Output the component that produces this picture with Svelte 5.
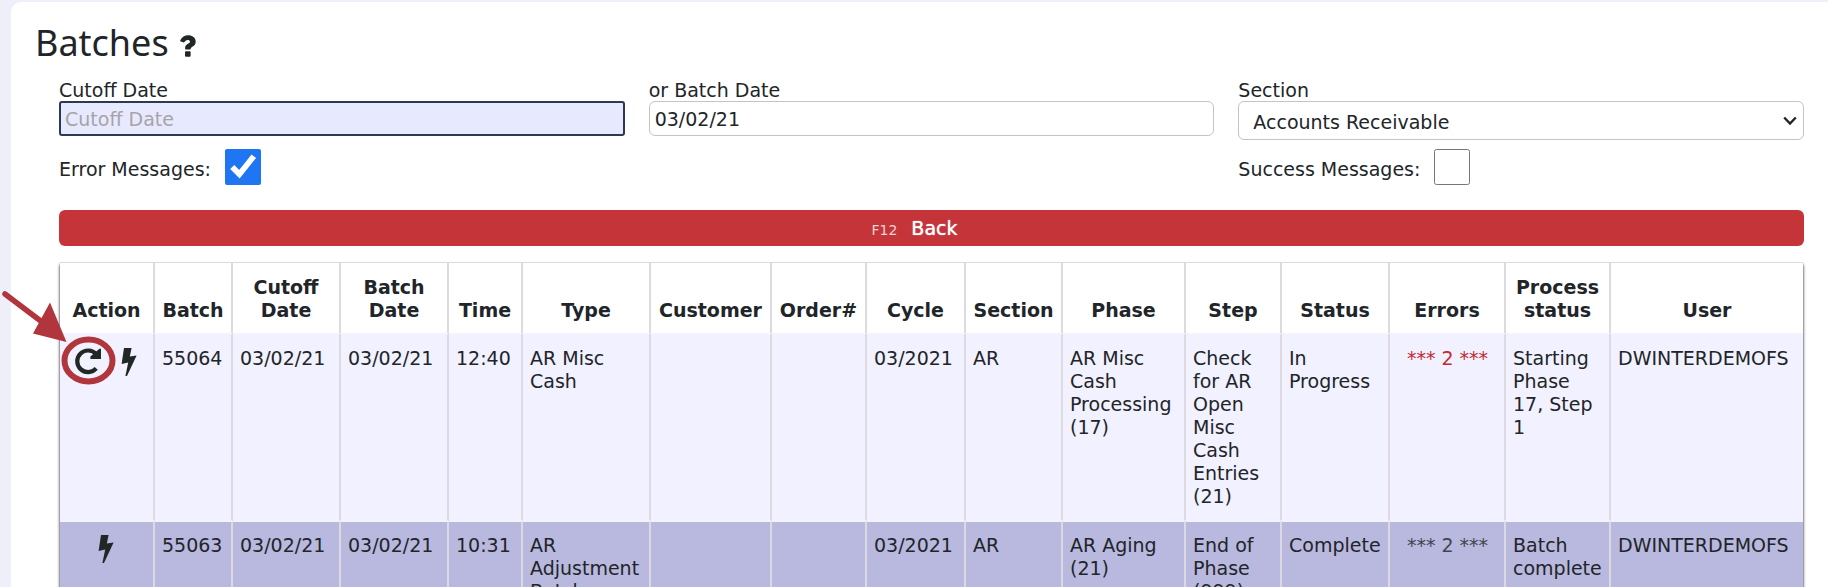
<script>
  const columns = [
    { label: 'Action', width: 95 },
    { label: 'Batch', width: 78 },
    { label: 'Cutoff Date', width: 108 },
    { label: 'Batch Date', width: 108 },
    { label: 'Time', width: 74 },
    { label: 'Type', width: 128 },
    { label: 'Customer', width: 121 },
    { label: 'Order#', width: 95 },
    { label: 'Cycle', width: 99 },
    { label: 'Section', width: 97 },
    { label: 'Phase', width: 123 },
    { label: 'Step', width: 96 },
    { label: 'Status', width: 108 },
    { label: 'Errors', width: 116 },
    { label: 'Process status', width: 105 },
    { label: 'User', width: 192 }
  ];

  const rows = [
    {
      retry: true,
      failed: true,
      before: ['55064', '03/02/21', '03/02/21', '12:40', 'AR Misc Cash', '', '', '03/2021', 'AR',
        'AR Misc Cash Processing (17)', 'Check for AR Open Misc Cash Entries (21)', 'In Progress'],
      errors: '*** 2 ***',
      after: ['Starting Phase 17, Step 1', 'DWINTERDEMOFS']
    },
    {
      retry: false,
      failed: false,
      before: ['55063', '03/02/21', '03/02/21', '10:31', 'AR Adjustment Batch', '', '', '03/2021', 'AR',
        'AR Aging (21)', 'End of Phase (999)', 'Complete'],
      errors: '*** 2 ***',
      after: ['Batch complete', 'DWINTERDEMOFS']
    }
  ];

  let cutoffDate = $state('');
  let batchDate = $state('03/02/21');
  let section = $state('Accounts Receivable');
  let showErrors = $state(true);
  let showSuccess = $state(false);
</script>

<main class="panel">
  <header class="title">
    <h1>Batches</h1>
    <button class="icon-button" aria-label="Help">
      <svg width="16" height="22" viewBox="0 0 16 22" aria-hidden="true">
        <path d="M0.3 5.2C2 1.8 4.6 0.2 8.2 0.2c4 0 7.5 2.4 7.5 6.2 0 5-5 5.2-5 7.2 0 .6-.4 1-1 1H6.1c-.6 0-1-.4-1-1v-.6c0-4 4.9-4.2 4.9-6.2 0-1.2-1-1.8-2.2-1.8-1.6 0-2.4.9-3.3 2.1-.3.4-.8.5-1.2.2L.6 6.5c-.4-.3-.5-.9-.3-1.3Z" fill="currentColor" />
        <rect x="5" y="16.2" width="5.6" height="5.6" rx="1" fill="currentColor" />
      </svg>
    </button>
  </header>

  <div class="body">
    <form class="filters" onsubmit={(e) => e.preventDefault()}>
      <div class="field">
        <label for="cutoff">Cutoff Date</label>
        <input id="cutoff" class="text active" type="text" placeholder="Cutoff Date" bind:value={cutoffDate} />
      </div>
      <div class="field">
        <label for="batch">or Batch Date</label>
        <input id="batch" class="text" type="text" bind:value={batchDate} />
      </div>
      <div class="field">
        <label for="section">Section</label>
        <div class="select">
          <select id="section" bind:value={section}>
            <option>Accounts Receivable</option>
          </select>
          <svg class="chevron" width="14" height="10" viewBox="0 0 14 10" aria-hidden="true">
            <path d="M1.2 1.5 7 7.5l5.8-6" fill="none" stroke="currentColor" stroke-width="2.4" />
          </svg>
        </div>
      </div>
      <div class="check">
        <label for="errors">Error Messages:</label>
        <input id="errors" type="checkbox" bind:checked={showErrors} />
      </div>
      <div class="check last">
        <label for="success">Success Messages:</label>
        <input id="success" type="checkbox" bind:checked={showSuccess} />
      </div>
    </form>

    <button class="back"><small>F12</small><span>Back</span></button>

    <div class="table-wrap">
      <table>
        <colgroup>
          {#each columns as column}
            <col style="width: {column.width}px" />
          {/each}
        </colgroup>
        <thead>
          <tr>
            {#each columns as column}
              <th scope="col">{column.label}</th>
            {/each}
          </tr>
        </thead>
        <tbody>
          {#each rows as row}
            <tr>
              <td>
                <div class="actions">
                  {#if row.retry}
                    <button class="icon-button" aria-label="Retry batch">
                      <svg width="26" height="28" viewBox="0 0 26 28" aria-hidden="true">
                        <path d="M21.2 6.2A10.8 10.8 0 1 0 21.2 20.4" fill="none" stroke="currentColor" stroke-width="4.2" />
                        <path d="M26 0.8V11H15.4V8.6L24.4 0.8Z" fill="currentColor" />
                      </svg>
                    </button>
                  {/if}
                  <button class="icon-button" aria-label="Process batch">
                    <svg width="16" height="28" viewBox="0 0 16 28" aria-hidden="true">
                      <path d="M3 0H10.6L8.8 8.6 15.6 7.4 6 28H4.4L7.2 14.6 0.6 16Z" fill="currentColor" />
                    </svg>
                  </button>
                </div>
              </td>
              {#each row.before as value}
                <td>{value}</td>
              {/each}
              <td class="errors" class:failed={row.failed}>{row.errors}</td>
              {#each row.after as value}
                <td>{value}</td>
              {/each}
            </tr>
          {/each}
        </tbody>
      </table>
      <svg class="callout" width="120" height="100" viewBox="0 0 120 100" aria-hidden="true">
        <path d="M5 4 46 35" stroke="#b0353c" stroke-width="5.5" stroke-linecap="round" />
        <path d="M50 12.5 66.5 52 33 43.5Z" fill="#b0353c" />
        <ellipse cx="88.5" cy="70.5" rx="24" ry="21" fill="none" stroke="#b0353c" stroke-width="6" />
      </svg>
    </div>
  </div>
</main>

<style>
  :global(body) {
    background: #efeff9;
    overflow: hidden;
  }

  .panel {
    box-sizing: border-box;
    min-height: 100vh;
    margin: 2px 0 0 11px;
    padding: 14px 24px 0;
    border-top-left-radius: 10px;
    background: #fff;
    color: #212529;
    font: 19px/23px "DejaVu Sans", sans-serif;
  }

  .title {
    display: flex;
    align-items: center;
    gap: 11px;
  }

  h1 {
    margin: 0;
    font: 400 36px/53px "Noto Sans", sans-serif;
  }

  .icon-button {
    display: block;
    padding: 0;
    border: 0;
    background: none;
    color: #202724;
  }

  .title .icon-button {
    padding-top: 6px;
  }

  .icon-button svg {
    display: block;
  }

  .body {
    padding: 10px 0 0 24px;
  }

  .filters {
    display: grid;
    grid-template-columns: repeat(3, minmax(0, 1fr));
    column-gap: 24px;
    row-gap: 9px;
  }

  .field label {
    display: block;
    line-height: 22px;
  }

  .text,
  select {
    box-sizing: border-box;
    display: block;
    width: 100%;
    margin: 0;
    border: 1px solid #c3c3c8;
    border-radius: 6px;
    background: #fff;
    color: #212529;
    font: inherit;
  }

  .text {
    height: 35px;
    padding: 0 5px;
  }

  .text.active {
    border: 2px solid #2b3a52;
    border-radius: 3px;
    padding: 0 4px;
    background: #e7eaff;
  }

  .text::placeholder {
    color: #a8a3a8;
    opacity: 1;
  }

  .select {
    display: grid;
    align-items: center;
  }

  .select > * {
    grid-area: 1 / 1;
  }

  select {
    height: 39px;
    padding: 3px 28px 0 14px;
    appearance: none;
  }

  .chevron {
    justify-self: end;
    margin-right: 7px;
    pointer-events: none;
  }

  .check {
    display: flex;
    align-items: center;
    gap: 14px;
  }

  .check label {
    padding-top: 4px;
  }

  .check.last {
    grid-column: 3;
  }

  .check input {
    width: 36px;
    height: 36px;
    margin: 0;
    accent-color: #1f75f2;
  }

  .back {
    display: flex;
    align-items: baseline;
    justify-content: center;
    gap: 14px;
    width: 100%;
    margin: 25px 0 17px;
    padding: 7px 34px 6px 0;
    border: 0;
    border-radius: 6px;
    background: #c43439;
    color: #fff;
    font: inherit;
  }

  .back span {
    text-shadow: 0 0 1px #fff;
  }

  .back small {
    color: #eed2d4;
    font-size: 14px;
    line-height: 16px;
  }

  .table-wrap {
    position: relative;
    margin: 0 1px;
  }

  table {
    width: 100%;
    table-layout: fixed;
    border-collapse: separate;
    border-spacing: 0;
    box-shadow: 0 0 1px #6a666e, 0 2px 3px #28242e;
  }

  th,
  td {
    padding: 12px 6px 12px 7px;
    border-top: 2px solid #f3f2ff;
    border-right: 2px solid #dcdae0;
    text-align: left;
    vertical-align: top;
  }

  th {
    padding: 13px 6px 11px;
    border-top: 0;
    background: #fff;
    font-weight: 700;
    text-align: center;
    vertical-align: bottom;
  }

  th:last-child,
  td:last-child {
    border-right: 0;
  }

  td {
    background: #f1f1ff;
  }

  tr:nth-child(even) td {
    background: #b9b8df;
    background-clip: padding-box;
  }

  td:first-child {
    padding: 13px 2px 0 0;
  }

  .actions {
    display: flex;
    justify-content: center;
    gap: 20px;
  }

  .errors {
    color: #41454e;
    text-align: center;
  }

  .errors.failed {
    color: #c52a30;
  }

  .callout {
    position: absolute;
    top: 27px;
    left: -60px;
    pointer-events: none;
  }
</style>
